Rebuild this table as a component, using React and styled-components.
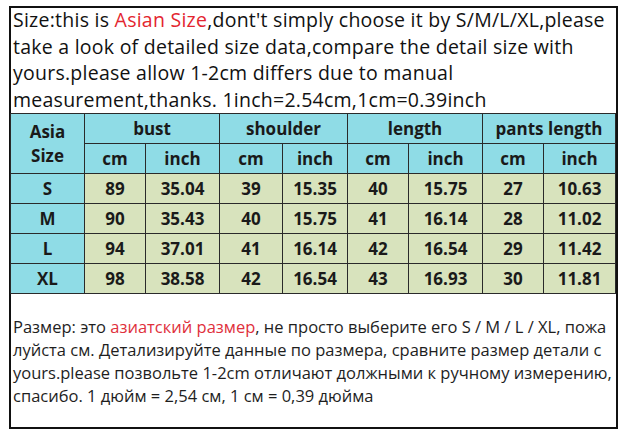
import React from "react";
import styled, { createGlobalStyle } from "styled-components";

const Global = createGlobalStyle`
  html, body { margin: 0; padding: 0; background: #ffffff; }
  body { width: 627px; height: 435px; overflow: hidden; }
`;

const Frame = styled.div`
  box-sizing: border-box;
  margin: 6px 0 0 9px;
  width: 609px;
  height: 423px;
  border: 2px solid #111;
  display: flex;
  flex-direction: column;
  background: #fff;
`;

const Note = styled.div`
  font-family: "Open Sans", "Noto Sans", sans-serif;
  font-size: 19.5px;
  letter-spacing: 0.25px;
  line-height: 26.6px;
  color: #111;
  padding: 0 0 0 2px;
  margin-top: -1px;
`;

const Line = styled.div`
  white-space: nowrap;
`;

const Red = styled.span`
  color: ${(p) => p.$tone || "#e3252f"};
`;

const Table = styled.table`
  border-collapse: collapse;
  table-layout: fixed;
  width: 605px;
  margin-left: -1px;
  font-family: "Open Sans", "Noto Sans", sans-serif;
  font-weight: 700;
  color: #1a1a1a;
`;

const Cell = styled.td`
  box-sizing: border-box;
  height: 30px;
  padding: 0;
  border: 1px solid #2a2a2a;
  text-align: center;
  vertical-align: middle;
  font-size: 17px;
  line-height: ${(p) => (p.$tall ? "24px" : "20px")};
  background: ${(p) => (p.$head ? "#8fdce6" : "#d8e3bd")};
`;

const RuNote = styled.div`
  font-family: "Open Sans", "Noto Sans", sans-serif;
  font-size: 16.5px;
  line-height: 23px;
  color: #1e1e1e;
  padding: 21px 0 0 2px;
`;

const groups = ["bust", "shoulder", "length", "pants length"];
const rows = [
  ["S", "89", "35.04", "39", "15.35", "40", "15.75", "27", "10.63"],
  ["M", "90", "35.43", "40", "15.75", "41", "16.14", "28", "11.02"],
  ["L", "94", "37.01", "41", "16.14", "42", "16.54", "29", "11.42"],
  ["XL", "98", "38.58", "42", "16.54", "43", "16.93", "30", "11.81"],
];
const widths = [74, 61, 74, 63, 65, 61, 74, 61, 72];

export default function App() {
  return (
    <>
      <Global />
      <Frame>
        <Note>
          <Line>
            Size:this is <Red>Asian Size</Red>,dont't simply choose it by S/M/L/XL,please
          </Line>
          <Line>take a look of detailed size data,compare the detail size with</Line>
          <Line>yours.please allow 1-2cm differs due to manual</Line>
          <Line>measurement,thanks. 1inch=2.54cm,1cm=0.39inch</Line>
        </Note>
        <Table>
          <colgroup>
            {widths.map((w, i) => (
              <col key={i} style={{ width: w }} />
            ))}
          </colgroup>
          <tbody>
            <tr>
              <Cell $head $tall rowSpan={2}>
                Asia
                <br />
                Size
              </Cell>
              {groups.map((g) => (
                <Cell $head colSpan={2} key={g}>
                  {g}
                </Cell>
              ))}
            </tr>
            <tr>
              {groups.map((g) => (
                <React.Fragment key={g}>
                  <Cell $head>cm</Cell>
                  <Cell $head>inch</Cell>
                </React.Fragment>
              ))}
            </tr>
            {rows.map((r) => (
              <tr key={r[0]}>
                {r.map((v, i) => (
                  <Cell $head={i === 0} key={i}>
                    {v}
                  </Cell>
                ))}
              </tr>
            ))}
          </tbody>
        </Table>
        <RuNote>
          <Line>
            Размер: это <Red $tone="#e0303c">азиатский размер</Red>, не просто выберите его S / M / L / XL, пожа
          </Line>
          <Line>луйста см. Детализируйте данные по размера, сравните размер детали с</Line>
          <Line>yours.please позвольте 1-2cm отличают должными к ручному измерению,</Line>
          <Line>спасибо. 1 дюйм = 2,54 см, 1 см = 0,39 дюйма</Line>
        </RuNote>
      </Frame>
    </>
  );
}
